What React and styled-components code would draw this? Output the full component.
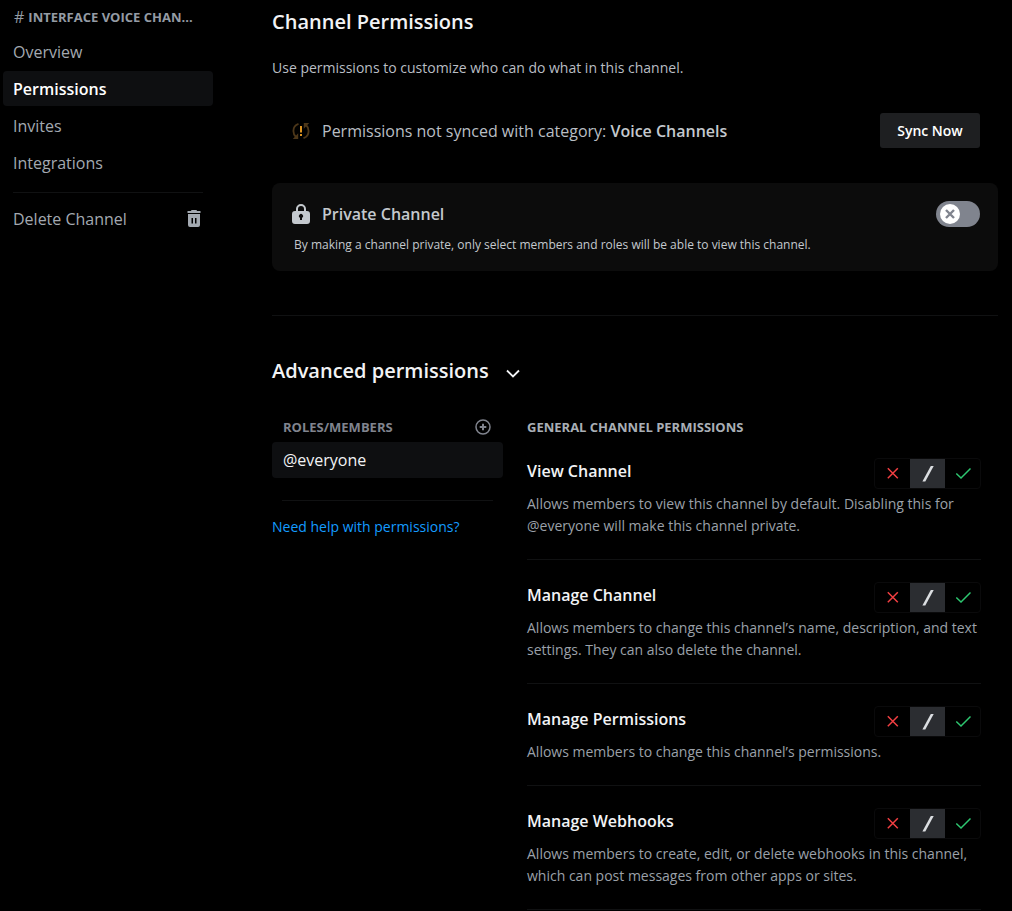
import React, { useState } from 'react';
import styled, { createGlobalStyle } from 'styled-components';

const permissions = [
  {
    id: 'view',
    name: 'View Channel',
    description: 'Allows members to view this channel by default. Disabling this for @everyone will make this channel private.',
  },
  {
    id: 'manage',
    name: 'Manage Channel',
    description: 'Allows members to change this channel’s name, description, and text settings. They can also delete the channel.',
  },
  {
    id: 'permissions',
    name: 'Manage Permissions',
    description: 'Allows members to change this channel’s permissions.',
  },
  {
    id: 'webhooks',
    name: 'Manage Webhooks',
    description: 'Allows members to create, edit, or delete webhooks in this channel, which can post messages from other apps or sites.',
  },
];

const tabs = ['Overview', 'Permissions', 'Invites', 'Integrations'];

function TrashIcon() {
  return (
    <svg width="14" height="17" viewBox="0 0 14 17" fill="currentColor" aria-hidden="true">
      <path d="M5 0h4a1 1 0 0 1 1 1h3.5v2H.5V1H4a1 1 0 0 1 1-1Z" />
      <path fillRule="evenodd" d="M1 4h12v11a2 2 0 0 1-2 2H3a2 2 0 0 1-2-2V4Zm3.5 4v5.5H6V8H4.5Zm3.5 0v5.5h1.500V8H8Z" />
    </svg>
  );
}

function SyncIcon() {
  return (
    <svg width="18" height="18" viewBox="0 0 18 18" fill="none" aria-hidden="true">
      <g stroke="#4d3719" strokeWidth="1.8">
        <path d="M6.500 1.800C3.400 2.800 1.400 5.600 1.400 9c0 2.400.9 4.500 2.600 6" />
        <path d="M11.500 16.200c3.100-1 5.100-3.800 5.100-7.200 0-2.400-.9-4.500-2.600-6" />
      </g>
      <path d="M6.200 11.200v5.800H.8Z M11.800 6.800V1h5.400Z" fill="#4d3719" />
      <path d="M8 4h2v6.500H8ZM8 12h2v2H8Z" fill="#dd9420" />
    </svg>
  );
}

function LockIcon() {
  return (
    <svg width="18" height="20" viewBox="0 0 18 20" fill="#c4c9ce" aria-hidden="true">
      <path
        fillRule="evenodd"
        d="M4 7V5a5 5 0 0 1 10 0v2h1a3 3 0 0 1 3 3v7a3 3 0 0 1-3 3H3a3 3 0 0 1-3-3v-7a3 3 0 0 1 3-3h1Zm2 0h6V5a3 3 0 0 0-6 0v2Zm4 6.700a2 2 0 1 0-2 0V16h2v-2.300Z"
      />
    </svg>
  );
}

function ChevronIcon() {
  return (
    <svg width="14" height="14" viewBox="0 0 14 14" fill="none" stroke="currentColor" strokeWidth="1.8" aria-hidden="true">
      <path d="M1 6.500l6 6 6-6" />
    </svg>
  );
}

function AddIcon() {
  return (
    <svg width="16" height="16" viewBox="0 0 16 16" fill="none" stroke="currentColor" strokeWidth="1.5" aria-hidden="true">
      <circle cx="8" cy="8" r="7" />
      <path d="M8 4.700v6.600M4.700 8h6.600" strokeWidth="2" />
    </svg>
  );
}

function DenyIcon() {
  return (
    <svg width="16" height="16" viewBox="0 0 16 16" fill="none" stroke="#f23f42" strokeWidth="1.5" aria-hidden="true">
      <path d="M2.800 2.300l10 10M12.800 2.300l-10 10" />
    </svg>
  );
}

function NeutralIcon() {
  return (
    <svg width="16" height="16" viewBox="0 0 16 16" fill="#dbdee1" aria-hidden="true">
      <path d="M10.800 0h2.900L5.300 15.500H2.400Z" />
    </svg>
  );
}

function AllowIcon() {
  return (
    <svg width="16" height="16" viewBox="0 0 16 16" fill="none" stroke="#2dc770" strokeWidth="1.5" aria-hidden="true">
      <path d="M1.300 7.500l4.700 4.500 9.500-9.500" />
    </svg>
  );
}

const choices = [
  { value: 'deny', label: 'Deny', icon: <DenyIcon /> },
  { value: 'neutral', label: 'Neutral', icon: <NeutralIcon /> },
  { value: 'allow', label: 'Allow', icon: <AllowIcon /> },
];

function Permission({ id, name, description }) {
  const [value, setValue] = useState('neutral');

  return (
    <PermissionItem>
      <PermissionTop>
        <PermissionName>{name}</PermissionName>
        <ChoiceGroup role="radiogroup" aria-label={name}>
          {choices.map((choice) => (
            <Choice key={choice.value} $selected={value === choice.value}>
              <HiddenInput
                type="radio"
                name={id}
                aria-label={choice.label}
                checked={value === choice.value}
                onChange={() => setValue(choice.value)}
              />
              {choice.icon}
            </Choice>
          ))}
        </ChoiceGroup>
      </PermissionTop>
      <PermissionText>{description}</PermissionText>
    </PermissionItem>
  );
}

function App() {
  const [tab, setTab] = useState('Permissions');
  const [isPrivate, setIsPrivate] = useState(false);
  const [open, setOpen] = useState(true);

  return (
    <Page>
      <GlobalStyle />
      <Sidebar>
        <ChannelName>
          <span>#</span>
          INTERFACE VOICE CHAN...
        </ChannelName>
        <Tabs>
          {tabs.map((name) => (
            <TabButton key={name} $active={tab === name} onClick={() => setTab(name)}>
              {name}
            </TabButton>
          ))}
        </Tabs>
        <SidebarDivider />
        <TabButton>
          Delete Channel
          <TrashIcon />
        </TabButton>
      </Sidebar>

      <Main>
        <Title>Channel Permissions</Title>
        <Intro>Use permissions to customize who can do what in this channel.</Intro>

        <SyncRow>
          <SyncIcon />
          <SyncText>
            Permissions not synced with category: <strong>Voice Channels</strong>
          </SyncText>
          <SyncButton>Sync Now</SyncButton>
        </SyncRow>

        <Card>
          <CardTop>
            <LockIcon />
            <CardTitle htmlFor="private">Private Channel</CardTitle>
            <Toggle $on={isPrivate}>
              <HiddenInput
                id="private"
                type="checkbox"
                checked={isPrivate}
                onChange={() => setIsPrivate(!isPrivate)}
              />
              <Knob>
                <svg width="12" height="12" viewBox="0 0 12 12" stroke="currentColor" strokeWidth="2.4" aria-hidden="true">
                  <path d="M2 2l8 8M10 2l-8 8" />
                </svg>
              </Knob>
            </Toggle>
          </CardTop>
          <CardText>
            By making a channel private, only select members and roles will be able to view this channel.
          </CardText>
        </Card>

        <Divider />

        <AdvancedTitle>
          <AdvancedButton aria-expanded={open} onClick={() => setOpen(!open)}>
            Advanced permissions
            <ChevronIcon />
          </AdvancedButton>
        </AdvancedTitle>

        {open && (
          <Columns>
            <Roles>
              <RolesHeader>
                <SectionTitle $dim>ROLES/MEMBERS</SectionTitle>
                <AddButton aria-label="Add members or roles">
                  <AddIcon />
                </AddButton>
              </RolesHeader>
              <RoleButton>@everyone</RoleButton>
              <RolesDivider />
              <HelpLink href="#help">Need help with permissions?</HelpLink>
            </Roles>
            <PermissionList>
              <SectionTitle>GENERAL CHANNEL PERMISSIONS</SectionTitle>
              {permissions.map((permission) => (
                <Permission key={permission.id} {...permission} />
              ))}
            </PermissionList>
          </Columns>
        )}
      </Main>
    </Page>
  );
}

export default App;

const GlobalStyle = createGlobalStyle`
  * {
    box-sizing: border-box;
  }

  body {
    margin: 0;
    background: #000;
    color: #b9bec4;
    font-family: "Open Sans", "Noto Sans", sans-serif;
    font-size: 14px;
    line-height: 20px;
  }

  button {
    border: none;
    padding: 0;
    background: none;
    color: inherit;
    font: inherit;
    cursor: pointer;
  }

  h1, h2, h3, p {
    margin: 0;
  }

  svg {
    display: block;
    flex: none;
  }
`;

const Page = styled.div`
  display: flex;
  gap: 59px;
  min-height: 100vh;
  padding-right: 14px;
`;

const Sidebar = styled.nav`
  flex: none;
  width: 213px;
  padding: 8px 0 0 3px;
`;

const ChannelName = styled.h2`
  display: flex;
  gap: 4px;
  padding: 0 11px;
  color: #949ba4;
  font-size: 13px;
  font-weight: 700;
  line-height: 18px;
  white-space: nowrap;

  span {
    font-size: 16px;
    font-weight: 400;
  }
`;

const Tabs = styled.div`
  display: flex;
  flex-direction: column;
  gap: 2px;
  margin-top: 8px;
`;

const TabButton = styled.button`
  display: flex;
  align-items: center;
  justify-content: space-between;
  width: 100%;
  height: 35px;
  padding: 0 12px 0 10px;
  border-radius: 4px;
  background: ${(props) => (props.$active ? '#0e0f11' : 'transparent')};
  color: ${(props) => (props.$active ? '#fff' : '#a3a9b1')};
  font-size: 16px;
  font-weight: ${(props) => (props.$active ? 600 : 500)};
  text-align: left;
`;

const SidebarDivider = styled.div`
  height: 1px;
  margin: 12px 10px 8px;
  background: #101112;
`;

const Main = styled.main`
  flex: 1;
  min-width: 0;
  padding-top: 10px;
`;

const Title = styled.h1`
  color: #f2f3f5;
  font-size: 20px;
  font-weight: 600;
  line-height: 24px;
`;

const Intro = styled.p`
  margin-top: 24px;
`;

const SyncRow = styled.div`
  display: flex;
  align-items: center;
  gap: 12px;
  margin-top: 35px;
  padding: 0 18px 0 20px;
`;

const SyncText = styled.p`
  flex: 1;
  font-size: 16px;

  strong {
    color: #c4c9ce;
    font-weight: 600;
  }
`;

const SyncButton = styled.button`
  width: 100px;
  height: 35px;
  border-radius: 3px;
  background: #1e1f21;
  color: #fff;
  font-weight: 600;
`;

const Card = styled.section`
  margin-top: 35px;
  padding: 18px 18px 17px 20px;
  border-radius: 8px;
  background: #0c0c0c;
`;

const CardTop = styled.div`
  display: flex;
  align-items: center;
  gap: 12px;
`;

const CardTitle = styled.label`
  flex: 1;
  color: #c4c9ce;
  font-size: 16px;
  font-weight: 600;
`;

const CardText = styled.p`
  margin-top: 9px;
  padding-left: 2px;
  color: #c4c9ce;
  font-size: 12px;
  line-height: 18px;
`;

const HiddenInput = styled.input`
  position: absolute;
  inset: 0;
  width: 100%;
  height: 100%;
  margin: 0;
  opacity: 0;
  cursor: pointer;
`;

const Toggle = styled.span`
  position: relative;
  display: flex;
  justify-content: ${(props) => (props.$on ? 'flex-end' : 'flex-start')};
  width: 44px;
  height: 26px;
  padding: 3px 4px;
  border-radius: 13px;
  background: ${(props) => (props.$on ? '#23a559' : '#80848e')};
`;

const Knob = styled.span`
  display: flex;
  align-items: center;
  justify-content: center;
  width: 20px;
  height: 20px;
  border-radius: 50%;
  background: #fff;
  color: #80848e;
`;

const Divider = styled.div`
  height: 1px;
  margin: 44px 0 43px;
  background: #101112;
`;

const AdvancedTitle = styled.h2`
  font-size: 20px;
  font-weight: 600;
  line-height: 24px;
`;

const AdvancedButton = styled.button`
  display: flex;
  align-items: center;
  gap: 17px;
  color: #f2f3f5;
`;

const Columns = styled.div`
  display: flex;
  gap: 24px;
  margin-top: 35px;
  padding-right: 17px;
`;

const Roles = styled.div`
  flex: none;
  width: 231px;
`;

const RolesHeader = styled.div`
  display: flex;
  align-items: center;
  justify-content: space-between;
  padding: 0 12px 0 11px;
`;

const SectionTitle = styled.h3`
  color: ${(props) => (props.$dim ? '#80848e' : '#a9afb6')};
  font-size: 13px;
  font-weight: 700;
  line-height: 18px;
`;

const AddButton = styled.button`
  color: #80848e;
`;

const RoleButton = styled.button`
  display: block;
  width: 100%;
  height: 36px;
  margin-top: 6px;
  padding: 0 11px;
  border-radius: 4px;
  background: #0e0f11;
  color: #f2f3f5;
  font-size: 16px;
  font-weight: 500;
  text-align: left;
`;

const RolesDivider = styled.div`
  height: 1px;
  margin: 22px 10px 16px;
  background: #101112;
`;

const HelpLink = styled.a`
  color: #149cff;
  text-decoration: none;
`;

const PermissionList = styled.div`
  flex: 1;
  min-width: 0;
`;

const PermissionItem = styled.div`
  padding: 22px 0;
  border-bottom: 1px solid #101112;
`;

const PermissionTop = styled.div`
  display: flex;
  align-items: flex-start;
  justify-content: space-between;
`;

const PermissionName = styled.h3`
  color: #f2f3f5;
  font-size: 16px;
  font-weight: 600;
  line-height: 26px;
`;

const ChoiceGroup = styled.div`
  display: flex;
  overflow: hidden;
  border: 1px solid #0a0a0b;
  border-radius: 4px;
`;

const Choice = styled.label`
  position: relative;
  display: flex;
  align-items: center;
  justify-content: center;
  width: 35px;
  height: 29px;
  background: ${(props) => (props.$selected ? '#2b2d31' : 'transparent')};
`;

const PermissionText = styled.p`
  margin-top: 4px;
  color: #9ba1a9;
  line-height: 22px;
`;
